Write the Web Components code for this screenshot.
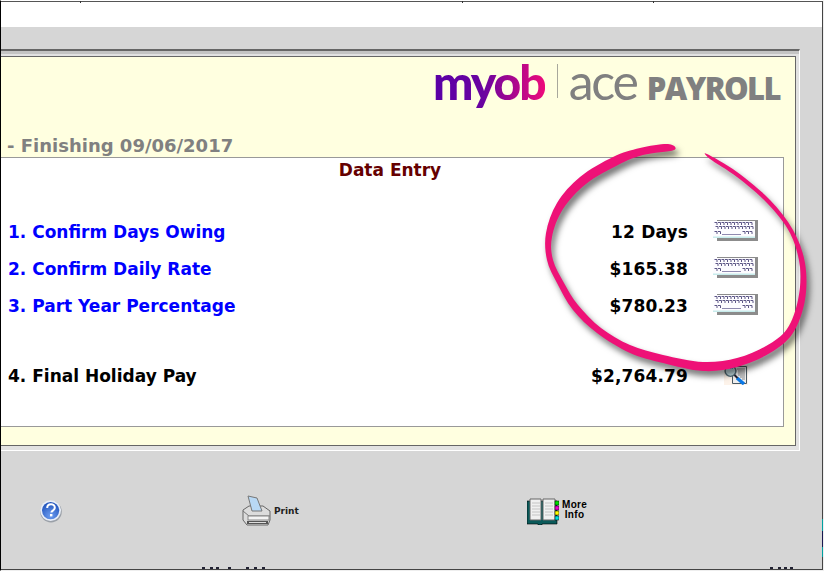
<!doctype html>
<html>
<head>
<meta charset="utf-8">
<style>
html, body { margin: 0; padding: 0; background: #fff; }
</style>
</head>
<body>
<payroll-screen>
    <payroll-logo slot="logo"></payroll-logo>
    <span slot="title">- Finishing 09/06/2017</span>
    <entry-row link value="12 Days" icon="keyboard">1. Confirm Days Owing</entry-row>
    <entry-row link value="$165.38" icon="keyboard">2. Confirm Daily Rate</entry-row>
    <entry-row link value="$780.23" icon="keyboard">3. Part Year Percentage</entry-row>
    <entry-row value="$2,764.79" icon="report" class="last">4. Final Holiday Pay</entry-row>
    <footer-bar slot="footer"></footer-bar>
</payroll-screen>

<script>
class PayrollLogo extends HTMLElement {
    constructor () {
	super();
	this.attachShadow({ mode: "open" });
	this.shadowRoot.innerHTML = `
<style>
:host {
  display: flex;
  align-items: baseline;
  font-family: Lato, "Open Sans", sans-serif;
  line-height: 40px;
  height: 40px;
}
.myob {
  font-size: 48px;
  font-weight: 900;
  letter-spacing: -2px;
  background: linear-gradient(90deg, #5a00a6 0%, #6a03a0 45%, #b0088c 75%, #ee0a7a 100%);
  -webkit-background-clip: text;
  background-clip: text;
  color: transparent;
  padding-bottom: 12px;
}
.bar {
  width: 1px;
  height: 34px;
  background: #a8a89c;
  margin: 0 11px 0 12px;
  align-self: center;
}
.ace {
  font-size: 50px;
  font-weight: 400;
  color: #808080;
  letter-spacing: -2.2px;
  margin-right: 10px;
}
.payroll {
  font-family: "Open Sans", sans-serif;
  font-size: 31px;
  font-weight: 800;
  letter-spacing: -1.6px;
  color: #808080;
}
</style>
<span class="myob">myob</span><span class="bar"></span><span class="ace">ace</span><span class="payroll">PAYROLL</span>`;
    }
}

class EntryRow extends HTMLElement {
    constructor () {
	super();
	this.attachShadow({ mode: "open" });
	const icon = this.getAttribute("icon") === "keyboard"
	    ? EntryRow.keyboard
	    : EntryRow.report;
	this.shadowRoot.innerHTML = `
<style>
:host {
  display: grid;
  grid-template-columns: 1fr auto 95px;
  align-items: center;
  height: 37px;
  font: bold 17px "DejaVu Sans", Verdana, sans-serif;
  color: #000;
}
:host([link]) .name { color: #0000ff; }
.name { padding-left: 7px; white-space: nowrap; }
.value { white-space: nowrap; text-align: right; letter-spacing: .15px; }
.icon { display: flex; justify-content: flex-end; padding-right: 25px; }
.keyboard { margin-top: -3px; }
.report { margin-right: 10px; margin-top: -6px; }
svg { display: block; }
</style>
<span class="name"><slot></slot></span>
<span class="value">${this.getAttribute("value")}</span>
<span class="icon">${icon}</span>`;
    }

    static get keyboard () {
	let keys = "";
	const rows = [ 3.5, 7.5, 12.5 ];
	rows.forEach( (y, r) => {
	    for ( let c = 0; c < 11; c++ ) {
		if ( r === 2 && c > 1 && c < 8 )
		    continue;
		const x = 1.5 + c * 3.5 + ( r === 1 ? 1 : 0 );
		keys += `<path d="M${x} ${y}h2.5v2.5" />`;
	    }
	});
	return `<svg class="keyboard" width="45" height="22" viewBox="0 0 45 22">
<rect x="4" y="1" width="41" height="21" fill="#8c8c8c"/>
<rect x="0" y="2" width="42" height="17" fill="#fdfcff"/>
<rect x="0" y="17.5" width="42" height="1.5" fill="#c8ecec"/>
<g fill="none" stroke="#5d5786" stroke-width="1">${keys}</g>
<path d="M9 15.5h19" stroke="#8f8ab0" fill="none"/>
</svg>`;
    }

    static get report () {
	return `<svg class="report" width="25" height="24" viewBox="0 0 25 24">
<rect x="1" y="4" width="24" height="20" fill="#fdf3ea"/>
<path d="M9.5 5.5h14v17h-14z" fill="#efefef" stroke="#4a5a64"/>
<path d="M14 8h8M15 10h7M15 12h7M15 14h7M17 16h5M19 18h3" stroke="#8a8a8a"/>
<circle cx="7.5" cy="10" r="5.4" fill="#c9e4ea" stroke="#56707c" stroke-width="1.4"/>
<path d="M7 7.5a3 3 0 0 1 3 0" stroke="#2aa8c0" fill="none"/>
<path d="M14 17l7 6" stroke="#0a78e6" stroke-width="3.4"/>
<path d="M11.5 14l3 3" stroke="#223" stroke-width="2"/>
</svg>`;
    }
}

class FooterBar extends HTMLElement {
    constructor () {
	super();
	this.attachShadow({ mode: "open" });
	this.shadowRoot.innerHTML = `
<style>
:host {
  display: block;
  position: relative;
  height: 100%;
  font-family: "DejaVu Sans", Verdana, sans-serif;
  color: #222;
}
.row {
  display: grid;
  grid-template-columns: 38px 203px 285px auto;
  align-items: center;
  padding-top: 42px;
  height: 36px;
}
.item { display: flex; align-items: center; }
.print { font-size: 9px; font-weight: bold; margin-left: 3px; margin-top: -1px; }
.more {
  font: bold 10px/10px "Liberation Sans", Arial, sans-serif;
  letter-spacing: .3px;
  text-align: center;
  color: #000;
  margin-left: 3px;
  margin-top: -3px;
}
/* tops of the next row of labels, cut off by the window edge */
.cut {
  position: absolute;
  left: 0;
  right: 0;
  bottom: 0;
  height: 2px;
  background:
    linear-gradient(#223, #223) 201px 0 / 3px 2px no-repeat,
    linear-gradient(#223, #223) 209px 0 / 3px 2px no-repeat,
    linear-gradient(#223, #223) 215px 0 / 3px 2px no-repeat,
    linear-gradient(#223, #223) 227px 0 / 3px 2px no-repeat,
    linear-gradient(#223, #223) 245px 0 / 3px 2px no-repeat,
    linear-gradient(#223, #223) 253px 0 / 3px 2px no-repeat,
    linear-gradient(#223, #223) 261px 0 / 3px 2px no-repeat,
    linear-gradient(#223, #223) 769px 0 / 3px 2px no-repeat,
    linear-gradient(#223, #223) 777px 0 / 3px 2px no-repeat,
    linear-gradient(#223, #223) 783px 0 / 3px 2px no-repeat,
    linear-gradient(#223, #223) 789px 0 / 3px 2px no-repeat,
    linear-gradient(#223, #223) 802px 0 / 3px 2px no-repeat;
}
svg { display: block; }
</style>
<div class="row">
  <span></span>
  <span class="item">
    <svg width="24" height="24" viewBox="0 0 24 24">
      <defs><radialGradient id="b" cx=".5" cy=".8" r=".8"><stop offset="0" stop-color="#6d9df0"/><stop offset="1" stop-color="#1c4fb8"/></radialGradient></defs>
      <circle cx="12" cy="12.6" r="10.8" fill="#9aa0a8"/>
      <circle cx="11.6" cy="11.6" r="10.4" fill="#e8eef8"/>
      <circle cx="11.6" cy="11.6" r="8.6" fill="url(#b)"/>
      <path d="M8.2 9c0-5 7.6-5 7.6-.4 0 3-3.4 3-3.4 5" fill="none" stroke="#fff" stroke-width="2"/>
      <rect x="11" y="15" width="2.4" height="2.4" fill="#fff"/>
    </svg>
  </span>
  <span class="item">
    <svg width="29" height="33" viewBox="0 0 29 33">
      <path d="M1 15l6-4h14l7 5v9l-2 5H5l-4-5z" fill="#dcdcdc" stroke="#666"/>
      <path d="M6 1l9 2 5 13H10z" fill="#b8d8f4" stroke="#777"/>
      <path d="M1 16l6 5h21" fill="none" stroke="#777"/>
      <rect x="6" y="21" width="21" height="4" fill="#f4f4f4" stroke="#888"/>
      <path d="M5 26h21v3H5z" fill="#555"/>
      <path d="M7 27h17v1H7z" fill="#ddd"/>
    </svg>
    <span class="print">Print</span>
  </span>
  <span class="item">
    <svg width="32" height="27" viewBox="0 0 32 27">
      <path d="M0 3h30v23H15v1h-4v-1H0z" fill="#0a5a5a" stroke="#000" stroke-width=".6"/>
      <path d="M3 1h11v21H3zM16 1h12v21H16z" fill="#f0f0f0" stroke="#666" stroke-width="1"/>
      <path d="M5 5h8M5 8h8M5 11h8M5 14h8M5 17h8M18 5h8M18 8h8M18 11h8M18 14h8M18 17h8" stroke="#c4c4c4"/>
      <rect x="28" y="3" width="4" height="4" fill="#00e000" stroke="#000" stroke-width=".5"/>
      <rect x="28" y="8" width="4" height="4" fill="#f000d0" stroke="#000" stroke-width=".5"/>
      <rect x="28" y="13" width="4" height="4" fill="#ffff00" stroke="#000" stroke-width=".5"/>
      <rect x="28" y="18" width="4" height="4" fill="#00e0e0" stroke="#000" stroke-width=".5"/>
    </svg>
    <span class="more">More<br>Info</span>
  </span>
</div>
<div class="cut"></div>`;
    }
}

class PayrollScreen extends HTMLElement {
    // outline of the marker ring, clockwise from the top stroke end and back on the inside
    static ring = [
	[668,144], [640,148], [613,157], [580,177], [557,203], [546,233], [547,260], [557,283],
	[573,310], [597,333], [630,353], [663,363], [703,371], [737,367], [770,353], [793,333],
	[805,300], [805,263], [793,230], [770,200], [737,172], [707,154],
	[710,159], [737,177], [767,203], [790,233], [800,267], [798,300], [787,329], [766,346],
	[737,358], [703,362], [663,355], [630,345], [601,328], [578,305], [564,283], [553,260],
	[552,237], [563,209], [586,184], [618,165], [643,155], [674,150],
    ];

    static ringPath () {
	const pts = PayrollScreen.ring;
	const n = pts.length;
	let d = `M${pts[0][0]} ${pts[0][1]}`;
	for ( let i = 0; i < n; i++ ) {
	    const [ p0, p1, p2, p3 ] = [ i-1, i, i+1, i+2 ].map( k => pts[ (k + n) % n ] );
	    const c1 = [ p1[0] + (p2[0] - p0[0]) / 6, p1[1] + (p2[1] - p0[1]) / 6 ];
	    const c2 = [ p2[0] - (p3[0] - p1[0]) / 6, p2[1] - (p3[1] - p1[1]) / 6 ];
	    d += `C${c1[0]} ${c1[1]} ${c2[0]} ${c2[1]} ${p2[0]} ${p2[1]}`;
	}
	return d + "Z";
    }

    constructor () {
	super();
	this.attachShadow({ mode: "open" });
	this.shadowRoot.innerHTML = `
<style>
:host {
  display: flex;
  flex-direction: column;
  position: relative;
  box-sizing: border-box;
  width: 824px;
  height: 571px;
  overflow: hidden;
  border-top: 1px solid #fff;
  border-bottom: 1px solid #eee;
  border-left: 1px solid #000;
  border-right: 1px solid #eee;
  background: #d6d6d6;
}
.strip {
  box-sizing: border-box;
  height: 26px;
  background: #fff;
  border-top: 1px solid #555;
  border-right: 1px solid #444;
  flex: none;
}
.desk {
  flex: 1;
  padding: 22px 22px 0 0;
  border-bottom: 1px solid #444;
  border-right: 1px solid #444;
  display: flex;
  flex-direction: column;
  position: relative;
}
.frame {
  flex: none;
  height: 402px;
  box-sizing: border-box;
  border-top: 2px solid #666;
  border-right: 1px solid #fff;
  border-bottom: 1px solid #fff;
}
.frame-in {
  box-sizing: border-box;
  height: 100%;
  border-top: 3px solid #c4c4c4;
  padding: 2px 3px 4px 0;
  background: #e2e2e2;
}
.panel {
  box-sizing: border-box;
  height: 100%;
  background: #ffffe0;
  border: solid #666;
  border-width: 1px 1px 1px 0;
  display: flex;
  flex-direction: column;
  padding-right: 11px;
}
.head {
  display: flex;
  justify-content: flex-end;
  padding: 4px 4px 0 0;
  height: 74px;
  flex: none;
}
.title {
  font: bold 18px/22px "DejaVu Sans", Verdana, sans-serif;
  color: #808080;
  padding: 0 0 0 6px;
  height: 22px;
  white-space: nowrap;
  flex: none;
}
.entry {
  background: #fff;
  border: solid #999;
  border-width: 1px 1px 1px 0;
  height: 270px;
  box-sizing: border-box;
  display: flex;
  flex-direction: column;
  flex: none;
}
.caption {
  font: bold 17px/24px "DejaVu Sans", Verdana, sans-serif;
  color: #660000;
  text-align: center;
  margin-bottom: 31px;
  padding-right: 4px;
}
.rows { display: flex; flex-direction: column; }
::slotted(entry-row.last) { margin-top: 33px; }
.foot { flex: 1; }
.tick { position: absolute; top: 0; width: 1px; height: 2px; background: #333; }
.edge {
  position: absolute;
  right: -1px;
  bottom: 12px;
  width: 1px;
  height: 38px;
  background: linear-gradient(#00a0a0 0 12px, #181850 12px 28px, #00a0a0 28px);
}
.ring {
  position: absolute;
  left: -1px;
  top: -1px;
  width: 824px;
  height: 571px;
  pointer-events: none;
  filter: drop-shadow(3px 5px 3px rgba(0,0,0,.55));
}
</style>
<div class="strip"></div>
<i class="tick" style="left:79px"></i><i class="tick" style="left:461px"></i><i class="tick" style="left:652px"></i>
<div class="desk">
  <div class="frame"><div class="frame-in"><div class="panel">
    <div class="head"><slot name="logo"></slot></div>
    <div class="title"><slot name="title"></slot></div>
    <div class="entry">
      <div class="caption">Data Entry</div>
      <div class="rows"><slot></slot></div>
    </div>
  </div></div></div>
  <div class="foot"><slot name="footer"></slot></div>
  <i class="edge"></i>
</div>
<svg class="ring" viewBox="0 0 824 571">
  <path fill="#ee1177" d="${PayrollScreen.ringPath()}"/>
</svg>`;
    }
}

customElements.define("payroll-logo", PayrollLogo );
customElements.define("entry-row", EntryRow );
customElements.define("footer-bar", FooterBar );
customElements.define("payroll-screen", PayrollScreen );
</script>
</body>
</html>
